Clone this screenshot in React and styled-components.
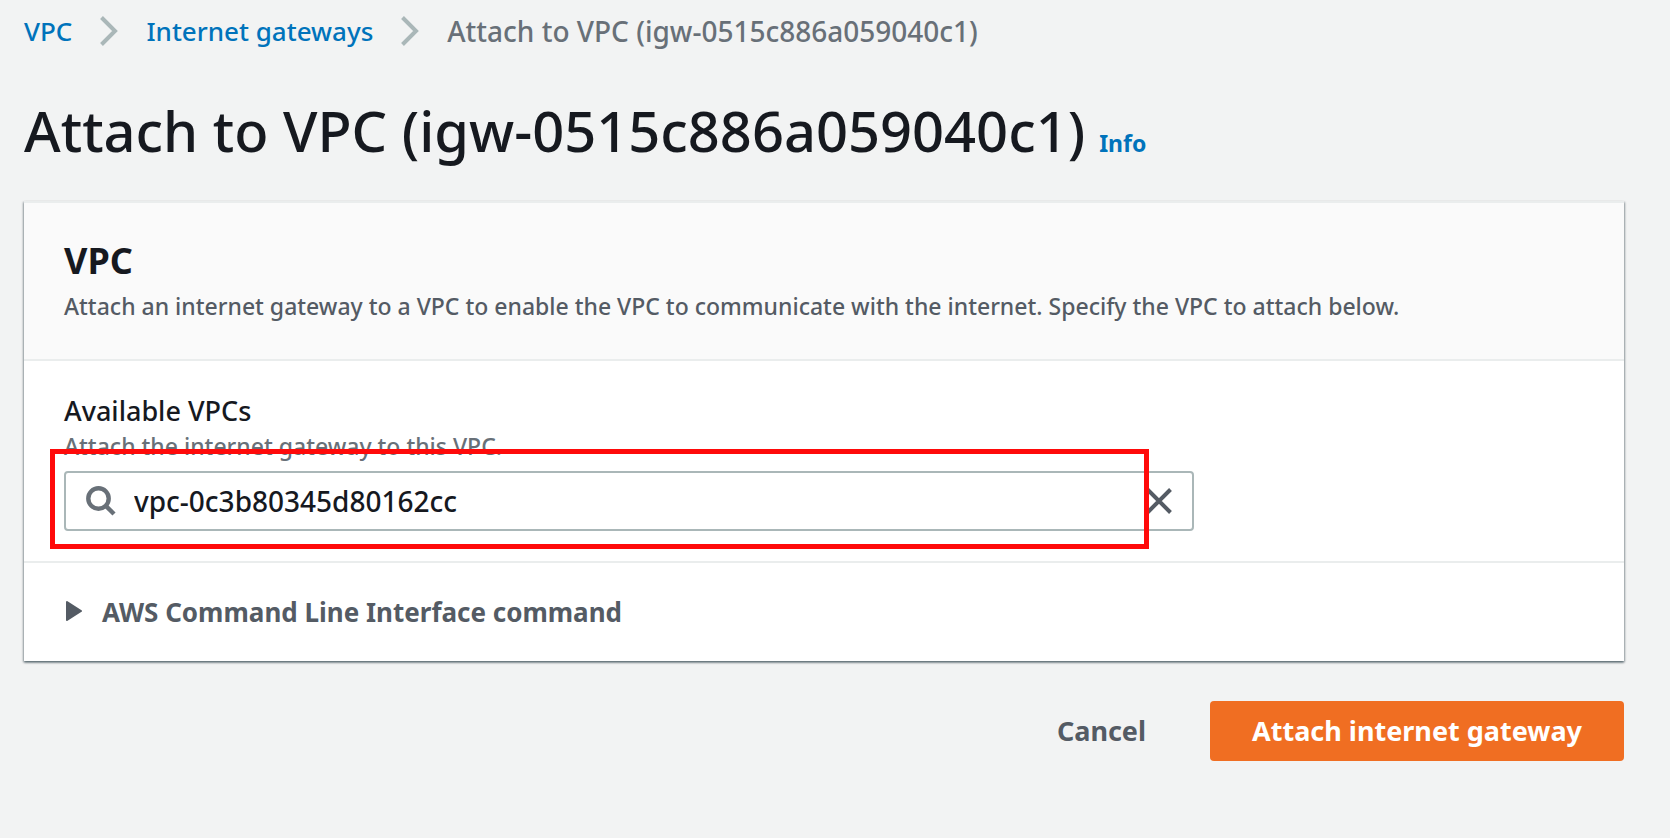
import React, { useState } from "react";
import styled, { createGlobalStyle } from "styled-components";

const GlobalStyle = createGlobalStyle`
  *, *::before, *::after { box-sizing: border-box; }
  body {
    margin: 0;
    background: #f2f3f3;
    color: #16191f;
    font-family: "Noto Sans", "Open Sans", sans-serif;
    font-size: 26px;
    line-height: 44px;
  }
  button, input { font: inherit; color: inherit; }
`;

const Page = styled.main`
  padding: 9px 46px 40px 24px;
`;

const Breadcrumbs = styled.ol`
  display: flex;
  align-items: center;
  gap: 28px;
  margin: 0;
  padding: 0;
  list-style: none;
  font-weight: 500;
`;

const Crumb = styled.li`
  display: flex;
  align-items: center;
  gap: 28px;
  color: #687078;
  font-size: ${(p) => (p.$current ? 28 : 26)}px;
`;

const Link = styled.a`
  color: #0073bb;
  text-decoration: none;
`;

const InfoLink = styled(Link)`
  font-size: 23px;
  font-weight: 700;
`;

const TitleRow = styled.header`
  display: flex;
  align-items: baseline;
  gap: 14px;
  margin: 41px 0 35px;
`;

const Title = styled.h1`
  margin: 0;
  font-size: 56px;
  line-height: 72px;
  font-weight: 500;
`;

const Card = styled.section`
  background: #fff;
  border-top: 2px solid #eaeded;
  box-shadow: 0 2px 2px 0 rgba(0, 28, 36, 0.3), 1px 1px 2px 0 rgba(0, 28, 36, 0.3),
    -1px 1px 2px 0 rgba(0, 28, 36, 0.3);
`;

const CardHeader = styled.div`
  padding: 36px 40px 30px;
  background: #fafafa;
  border-bottom: 2px solid #eaeded;
`;

const CardTitle = styled.h2`
  margin: 0;
  font-size: 36px;
  line-height: 44px;
  font-weight: 700;
`;

const Description = styled.p`
  margin: 0;
  color: #545b64;
  font-size: 23px;
  line-height: 46px;
  font-weight: 500;
`;

const CardBody = styled.div`
  padding: 32px 40px 30px;
  border-bottom: 2px solid #eaeded;
`;

const Label = styled.label`
  display: block;
  font-size: 27px;
  line-height: 36px;
  font-weight: 500;
`;

const Hint = styled.p`
  margin: 0 0 8px;
  color: #687078;
  font-size: 23px;
  line-height: 34px;
  font-weight: 500;
`;

const Field = styled.div`
  position: relative;
  display: flex;
  align-items: center;
  gap: 18px;
  width: calc(75% - 10px);
  height: 60px;
  padding: 0 20px;
  border: 2px solid #aab7b8;
  border-radius: 4px;
`;

const Input = styled.input`
  flex: 1;
  min-width: 0;
  padding: 0;
  border: 0;
  outline: 0;
  background: none;
  font-size: 28px;
  font-weight: 500;
`;

const ClearButton = styled.button`
  display: flex;
  padding: 0;
  border: 0;
  background: none;
  color: #545b64;
  cursor: pointer;
`;

const Highlight = styled.span`
  position: absolute;
  inset: -24px 43px -20px -16px;
  border: 5px solid #ff0a0a;
  pointer-events: none;
`;

const CardFooter = styled.div`
  padding: 28px 40px;
`;

const Expander = styled.button`
  display: flex;
  align-items: center;
  gap: 20px;
  padding: 0;
  border: 0;
  background: none;
  color: #545b64;
  font-weight: 700;
  line-height: 42px;
  cursor: pointer;
`;

const Actions = styled.div`
  display: flex;
  justify-content: flex-end;
  gap: 22px;
  margin-top: 40px;
`;

const Button = styled.button`
  height: 60px;
  padding: 0 42px;
  border: 0;
  border-radius: 4px;
  background: ${(p) => (p.$primary ? "#f06e22" : "transparent")};
  color: ${(p) => (p.$primary ? "#fff" : "#545b64")};
  font-size: 27px;
  font-weight: 700;
  cursor: pointer;
`;

const Chevron = () => (
  <svg width="18" height="30" viewBox="0 0 18 30" fill="none" stroke="#aab7b8" strokeWidth="4" aria-hidden="true">
    <path d="M1.5 1.5 15 15 1.5 28.5" />
  </svg>
);

const SearchIcon = () => (
  <svg width="30" height="30" viewBox="0 0 30 30" fill="none" stroke="#687078" strokeWidth="4.4" aria-hidden="true">
    <circle cx="12.5" cy="12.5" r="10.2" />
    <path d="M19.500 19.500l8.500 8.500" />
  </svg>
);

const CloseIcon = () => (
  <svg width="26" height="26" viewBox="0 0 26 26" fill="none" stroke="currentColor" strokeWidth="4" aria-hidden="true">
    <path d="M1.500 1.500l23 23M24.500 1.500l-23 23" />
  </svg>
);

const Triangle = () => (
  <svg width="18" height="22" viewBox="0 0 18 22" fill="#545b64" stroke="#545b64" strokeWidth="2" strokeLinejoin="round" aria-hidden="true">
    <path d="M3 1 17 10 3 19z" />
  </svg>
);

export default function App() {
  const [vpc, setVpc] = useState("vpc-0c3b80345d80162cc");
  return (
    <>
      <GlobalStyle />
      <Page>
        <nav aria-label="Breadcrumbs">
          <Breadcrumbs>
            <Crumb><Link href="#vpc">VPC</Link><Chevron /></Crumb>
            <Crumb><Link href="#gateways">Internet gateways</Link><Chevron /></Crumb>
            <Crumb $current aria-current="page">Attach to VPC (igw-0515c886a059040c1)</Crumb>
          </Breadcrumbs>
        </nav>
        <TitleRow>
          <Title>Attach to VPC (igw-0515c886a059040c1)</Title>
          <InfoLink href="#info">Info</InfoLink>
        </TitleRow>
        <Card>
          <CardHeader>
            <CardTitle>VPC</CardTitle>
            <Description>
              Attach an internet gateway to a VPC to enable the VPC to communicate with the internet. Specify the VPC to attach below.
            </Description>
          </CardHeader>
          <CardBody>
            <Label htmlFor="vpc">Available VPCs</Label>
            <Hint id="vpc-hint">Attach the internet gateway to this VPC.</Hint>
            <Field>
              <SearchIcon />
              <Input
                id="vpc"
                type="text"
                aria-describedby="vpc-hint"
                value={vpc}
                onChange={(e) => setVpc(e.target.value)}
              />
              <ClearButton type="button" aria-label="Clear" onClick={() => setVpc("")}>
                <CloseIcon />
              </ClearButton>
              <Highlight />
            </Field>
          </CardBody>
          <CardFooter>
            <Expander type="button" aria-expanded="false">
              <Triangle />
              AWS Command Line Interface command
            </Expander>
          </CardFooter>
        </Card>
        <Actions>
          <Button type="button">Cancel</Button>
          <Button type="button" $primary>Attach internet gateway</Button>
        </Actions>
      </Page>
    </>
  );
}
